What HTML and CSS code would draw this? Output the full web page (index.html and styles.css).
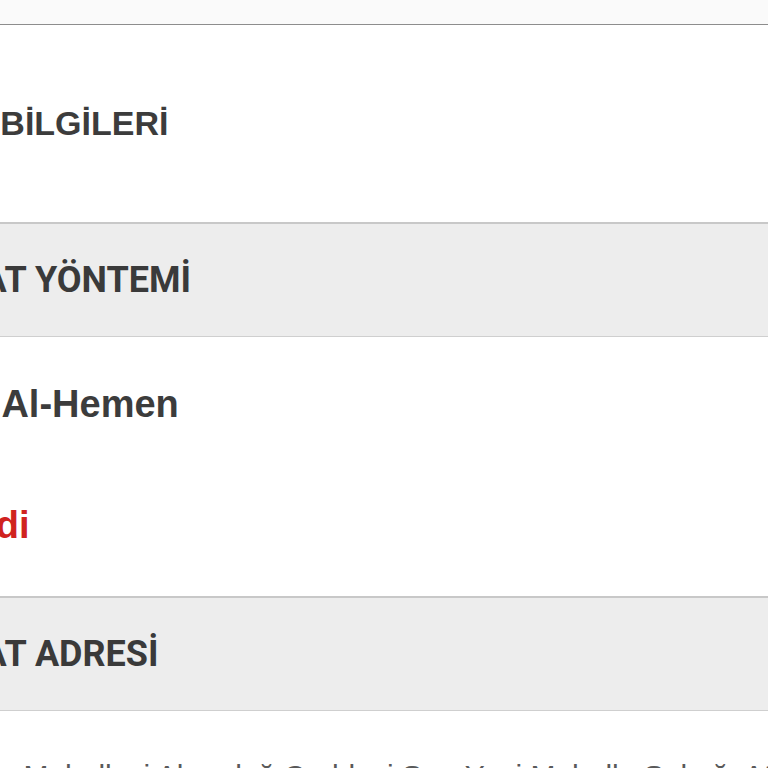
FILE: index.html
```html
<!DOCTYPE html>
<html lang="tr">
<head>
    <meta charset="UTF-8">
    <meta name="viewport" content="width=device-width, initial-scale=1.0">
    <title>Sipariş Özeti</title>
    <link rel="stylesheet" href="styles.css">
</head>
<body>

    <div class="top-bar"></div>

    <div class="checkout">
        <!-- Müşteri bilgileri -->
        <section class="block block-info">
            <h2 class="info-title shift-info">ÜYE BİLGİLERİ</h2>
        </section>

        <!-- Teslimat yöntemi -->
        <header class="panel-head">
            <h3 class="panel-title shift-panel">TESLİMAT YÖNTEMİ</h3>
        </header>
        <section class="block block-method">
            <p class="method-name shift-name">Gel Al-Hemen</p>
            <p class="method-status shift-status">Seçildi</p>
        </section>

        <!-- Teslimat adresi -->
        <header class="panel-head">
            <h3 class="panel-title shift-panel">TESLİMAT ADRESİ</h3>
        </header>
        <section class="block block-address">
            <p class="address-line shift-line">İçerenköy Mahallesi Alemdağ Caddesi Sarı Yeni Mahalle Sokağı Ataşehir</p>
        </section>
    </div>

</body>
</html>
```

FILE: styles.css
```css
/* Genel */
body {
    margin: 0;
    font-family: 'Liberation Sans', Arial, sans-serif;
    background: #ffffff;
    color: #3b3b3b;
    overflow: hidden;
}

.top-bar {
    height: 24px;
    background: #fafafa;
    border-bottom: 1px solid #8d8d8d;
}

.checkout {
    display: flex;
    flex-direction: column;
}

.block {
    background: #fff;
    white-space: nowrap;
}

/* Üye bilgileri */
.block-info {
    height: 197px;
    display: flex;
    align-items: center;
}

.info-title {
    margin: 0;
    font-size: 34px;
    font-weight: 700;
    color: #3c3c3c;
}

/* Gri başlık şeritleri */
.panel-head {
    height: 112px;
    display: flex;
    align-items: center;
    background: #ededed;
    border-top: 2px solid #c8c8c8;
    border-bottom: 1px solid #cfcfcf;
    white-space: nowrap;
}

.panel-title {
    margin: 0;
    font-family: Roboto, 'Liberation Sans', sans-serif;
    font-size: 36px;
    font-weight: 700;
    color: #3a3a3a;
}

/* Teslimat yöntemi */
.block-method {
    height: 259px;
    display: flex;
    flex-direction: column;
    padding-top: 46px;
    box-sizing: border-box;
}

.method-name {
    margin: 0;
    font-size: 38px;
    font-weight: 700;
    color: #3c3c3c;
}

.method-status {
    margin: 78px 0 0;
    font-size: 38px;
    font-weight: 700;
    color: #d0231f;
}

/* Adres */
.block-address {
    padding-top: 48px;
}

.address-line {
    margin: 0;
    font-size: 30px;
    color: #5a5a5a;
}

/* Yazıların sol kenardan taşan kısmı */
.shift-info { margin-left: -79px; }
.shift-panel { margin-left: -144px; }
.shift-name { margin-left: -69px; }
.shift-status { margin-left: -93px; }
.shift-line { margin-left: -115px; }
```
